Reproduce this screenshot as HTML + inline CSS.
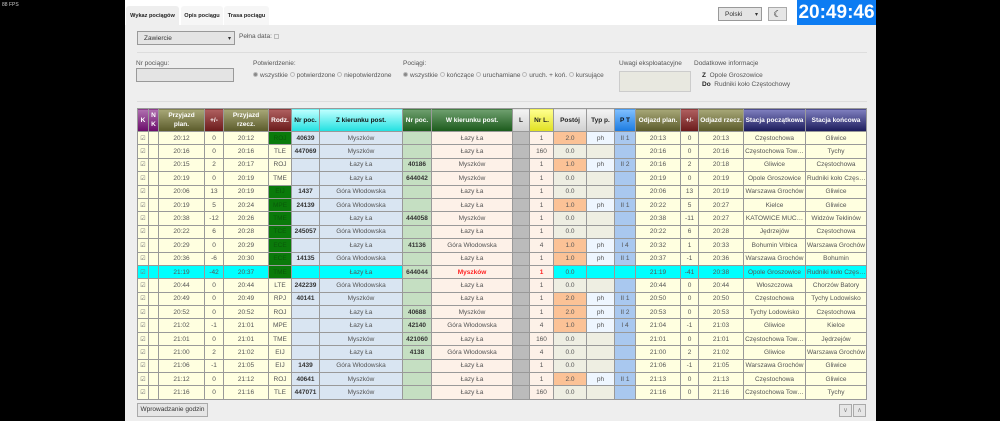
<!DOCTYPE html>
<html><head><meta charset="utf-8"><style>
*{box-sizing:border-box;margin:0;padding:0}
body{width:1000px;height:421px;background:#000;font-family:"Liberation Sans",Arial,sans-serif;position:relative;overflow:hidden;color:#555}
.fps{position:absolute;left:2px;top:2px;font-size:5px;color:#ccc}
.page{position:absolute;left:125px;top:0;width:751px;height:421px;background:#eee}
.top{position:absolute;left:0;top:0;width:751px;height:25px;background:#fff}
.tab{position:absolute;top:6px;height:19px;font-size:5.6px;color:#222;font-weight:bold;padding-top:7px;text-align:center;background:#f6f6f6;border-radius:3px 3px 0 0;white-space:nowrap;overflow:hidden}
.abs{position:absolute;font-size:6.5px;color:#555}
.sel{position:absolute;border:1px solid #999;background:#e4e4e4;font-size:6.5px;color:#333;padding:3px 6px}
.sel:after{content:"▾";position:absolute;right:3px;top:3px;font-size:6px}
.hr{position:absolute;left:12px;width:730px;height:1px;background:#ddd}
.rad{display:inline-block;width:5px;height:5px;border-radius:50%;border:1px solid #bbb;background:#eee;vertical-align:middle;margin:0 2px 1px 0}
.rad.on{background:#888}
table{position:absolute;left:12px;top:108px;width:729px;border-collapse:collapse;table-layout:fixed;font-size:6.5px}
th{height:23px;color:#fff;font-weight:bold;border:1px solid #999;text-align:center;line-height:9px;font-size:6.5px}
td{height:13.4px;border:1px solid #999;text-align:center;background:#ffffe0;color:#555;white-space:nowrap;overflow:hidden;padding:0 1px}
td.g{background:#0a7a0a;color:#0a5a0a}
td.n{background:#d9e5f2;font-weight:bold;color:#333}
td.z{background:#d9e5f2}
td.m{background:#c5dfc2;font-weight:bold;color:#333}
td.w{background:#fdf1e8}
td.l{background:#bbb}
td.p{background:#eeeee2}
td.po{background:#fbc296}
td.ty{background:#eef6ff}
td.pt{background:#a9c8ef}
td.ck{font-size:6px;color:#777}
tr.hi td{background:#00ffff}
tr.hi td.m{background:#c5dfc2}
tr.hi td.w{background:#fdf1e8}
tr.hi td.l{background:#bbb}
tr.hi td.g{background:#0a7a0a}
.red{color:#f22!important;font-weight:bold}
.pu{background:linear-gradient(#b070b0,#6a0a6a)}
.ol{background:linear-gradient(#a8a878,#5a5a2a)}
.dr{background:linear-gradient(#b06060,#6a1a1a)}
.cy{background:linear-gradient(#c0ffff,#20e0e0);color:#111!important}
.gr{background:linear-gradient(#70a070,#1a5a1a)}
.lg{background:linear-gradient(#f4f4f4,#d0d0d0);color:#222!important}
.ye{background:linear-gradient(#ffff90,#e0e020);color:#222!important}
.bl{background:linear-gradient(#80c0ff,#1a7ae0);color:#111!important}
.nv{background:linear-gradient(#8080c0,#1a1a5a)}
.btn{position:absolute;border:1px solid #aaa;background:#e6e6e6;font-size:6.5px;color:#333;text-align:center}
</style></head><body>
<div class="fps">88 FPS</div>
<div class="page">
<div class="top"></div>
<div class="tab" style="left:1px;width:53px;background:#eee">Wykaz pociągów</div>
<div class="tab" style="left:56px;width:42px">Opis pociągu</div>
<div class="tab" style="left:99px;width:45px">Trasa pociągu</div>
<div class="sel" style="left:593px;top:7px;width:44px;height:14px">Polski</div>
<div class="btn" style="left:643px;top:7px;width:19px;height:14px;font-size:9px;line-height:12px;color:#000">☾</div>
<div style="position:absolute;left:672px;top:0;width:79px;height:25px;background:#0d7cf2;color:#fff;font-weight:bold;font-size:19px;text-align:center;line-height:25px">20:49:46</div>

<div class="sel" style="left:12px;top:31px;width:98px;height:14px">Zawiercie</div>
<div class="abs" style="left:114px;top:33px">Pełna data: <span style="display:inline-block;width:5px;height:5px;border:1px solid #bbb;vertical-align:middle"></span></div>
<div class="hr" style="top:52px"></div>
<div class="abs" style="left:11px;top:60px">Nr pociągu:</div>
<div style="position:absolute;left:11px;top:68px;width:98px;height:14px;border:1px solid #999;background:#e4e4e4"></div>
<div class="abs" style="left:128px;top:60px">Potwierdzenie:</div>
<div class="abs" style="left:128px;top:72px"><span class="rad on"></span>wszystkie <span class="rad"></span>potwierdzone <span class="rad"></span>niepotwierdzone</div>
<div class="abs" style="left:278px;top:60px">Pociągi:</div>
<div class="abs" style="left:278px;top:72px"><span class="rad on"></span>wszystkie <span class="rad"></span>kończące <span class="rad"></span>uruchamiane <span class="rad"></span>uruch. + koń. <span class="rad"></span>kursujące</div>
<div class="abs" style="left:494px;top:60px">Uwagi eksploatacyjne</div>
<div style="position:absolute;left:494px;top:71px;width:72px;height:21px;border:1px solid #ccc;background:#e8e8e0"></div>
<div class="abs" style="left:569px;top:60px">Dodatkowe informacje</div>
<div class="abs" style="left:577px;top:72px"><b style="color:#222">Z</b>&nbsp; Opole Groszowice</div>
<div class="abs" style="left:577px;top:81px"><b style="color:#222">Do</b>&nbsp; Rudniki koło Częstochowy</div>
<div class="hr" style="top:101px"></div>

<table>
<colgroup><col style="width:11px"><col style="width:10px"><col style="width:46px"><col style="width:19px"><col style="width:45px"><col style="width:23px"><col style="width:28px"><col style="width:83px"><col style="width:29px"><col style="width:81px"><col style="width:17px"><col style="width:24px"><col style="width:33px"><col style="width:28px"><col style="width:21px"><col style="width:45px"><col style="width:18px"><col style="width:45px"><col style="width:62px"><col style="width:61px"></colgroup>
<tr><th class="pu">K</th><th class="pu">N<br>K</th><th class="ol">Przyjazd<br>plan.</th><th class="dr">+/-</th><th class="ol">Przyjazd<br>rzecz.</th><th class="dr">Rodz.</th><th class="cy">Nr poc.</th><th class="cy">Z kierunku post.</th><th class="gr">Nr poc.</th><th class="gr">W kierunku post.</th><th class="lg">L</th><th class="ye">Nr L.</th><th class="lg">Postój</th><th class="lg">Typ p.</th><th class="bl">P T</th><th class="ol">Odjazd plan.</th><th class="dr">+/-</th><th class="ol">Odjazd rzecz.</th><th class="nv">Stacja początkowa</th><th class="nv">Stacja końcowa</th></tr>
<tr><td class="ck">☑</td><td></td><td>20:12</td><td>0</td><td>20:12</td><td class="g">ROJ</td><td class="n">40639</td><td class="z">Myszków</td><td class="m"></td><td class="w">Łazy Ła</td><td class="l"></td><td class="w">1</td><td class="po">2.0</td><td class="ty">ph</td><td class="pt">II 1</td><td>20:13</td><td>0</td><td>20:13</td><td>Częstochowa</td><td>Gliwice</td></tr>
<tr><td class="ck">☑</td><td></td><td>20:16</td><td>0</td><td>20:16</td><td>TLE</td><td class="n">447069</td><td class="z">Myszków</td><td class="m"></td><td class="w">Łazy Ła</td><td class="l"></td><td class="w">160</td><td class="p">0.0</td><td class="p"></td><td class="pt"></td><td>20:16</td><td>0</td><td>20:16</td><td>Częstochowa Tow…</td><td>Tychy</td></tr>
<tr><td class="ck">☑</td><td></td><td>20:15</td><td>2</td><td>20:17</td><td>ROJ</td><td class="n"></td><td class="z">Łazy Ła</td><td class="m">40186</td><td class="w">Myszków</td><td class="l"></td><td class="w">1</td><td class="po">1.0</td><td class="ty">ph</td><td class="pt">II 2</td><td>20:16</td><td>2</td><td>20:18</td><td>Gliwice</td><td>Częstochowa</td></tr>
<tr><td class="ck">☑</td><td></td><td>20:19</td><td>0</td><td>20:19</td><td>TME</td><td class="n"></td><td class="z">Łazy Ła</td><td class="m">644042</td><td class="w">Myszków</td><td class="l"></td><td class="w">1</td><td class="p">0.0</td><td class="p"></td><td class="pt"></td><td>20:19</td><td>0</td><td>20:19</td><td>Opole Groszowice</td><td>Rudniki koło Częs…</td></tr>
<tr><td class="ck">☑</td><td></td><td>20:06</td><td>13</td><td>20:19</td><td class="g">EIJ</td><td class="n">1437</td><td class="z">Góra Włodowska</td><td class="m"></td><td class="w">Łazy Ła</td><td class="l"></td><td class="w">1</td><td class="p">0.0</td><td class="p"></td><td class="pt"></td><td>20:06</td><td>13</td><td>20:19</td><td>Warszawa Grochów</td><td>Gliwice</td></tr>
<tr><td class="ck">☑</td><td></td><td>20:19</td><td>5</td><td>20:24</td><td class="g">MPE</td><td class="n">24139</td><td class="z">Góra Włodowska</td><td class="m"></td><td class="w">Łazy Ła</td><td class="l"></td><td class="w">1</td><td class="po">1.0</td><td class="ty">ph</td><td class="pt">II 1</td><td>20:22</td><td>5</td><td>20:27</td><td>Kielce</td><td>Gliwice</td></tr>
<tr><td class="ck">☑</td><td></td><td>20:38</td><td>-12</td><td>20:26</td><td class="g">TME</td><td class="n"></td><td class="z">Łazy Ła</td><td class="m">444058</td><td class="w">Myszków</td><td class="l"></td><td class="w">1</td><td class="p">0.0</td><td class="p"></td><td class="pt"></td><td>20:38</td><td>-11</td><td>20:27</td><td>KATOWICE MUC…</td><td>Widzów Teklinów</td></tr>
<tr><td class="ck">☑</td><td></td><td>20:22</td><td>6</td><td>20:28</td><td class="g">TCE</td><td class="n">245057</td><td class="z">Góra Włodowska</td><td class="m"></td><td class="w">Łazy Ła</td><td class="l"></td><td class="w">1</td><td class="p">0.0</td><td class="p"></td><td class="pt"></td><td>20:22</td><td>6</td><td>20:28</td><td>Jędrzejów</td><td>Częstochowa</td></tr>
<tr><td class="ck">☑</td><td></td><td>20:29</td><td>0</td><td>20:29</td><td class="g">ECE</td><td class="n"></td><td class="z">Łazy Ła</td><td class="m">41136</td><td class="w">Góra Włodowska</td><td class="l"></td><td class="w">4</td><td class="po">1.0</td><td class="ty">ph</td><td class="pt">I 4</td><td>20:32</td><td>1</td><td>20:33</td><td>Bohumin Vrbica</td><td>Warszawa Grochów</td></tr>
<tr><td class="ck">☑</td><td></td><td>20:36</td><td>-6</td><td>20:30</td><td class="g">ECE</td><td class="n">14135</td><td class="z">Góra Włodowska</td><td class="m"></td><td class="w">Łazy Ła</td><td class="l"></td><td class="w">1</td><td class="po">1.0</td><td class="ty">ph</td><td class="pt">II 1</td><td>20:37</td><td>-1</td><td>20:36</td><td>Warszawa Grochów</td><td>Bohumin</td></tr>
<tr class="hi"><td class="ck">☑</td><td></td><td>21:19</td><td>-42</td><td>20:37</td><td class="g">TME</td><td class="n"></td><td class="z">Łazy Ła</td><td class="m">644044</td><td class="w red">Myszków</td><td class="l"></td><td class="w red">1</td><td>0.0</td><td></td><td></td><td>21:19</td><td>-41</td><td>20:38</td><td>Opole Groszowice</td><td>Rudniki koło Częs…</td></tr>
<tr><td class="ck">☑</td><td></td><td>20:44</td><td>0</td><td>20:44</td><td>LTE</td><td class="n">242239</td><td class="z">Góra Włodowska</td><td class="m"></td><td class="w">Łazy Ła</td><td class="l"></td><td class="w">1</td><td class="p">0.0</td><td class="p"></td><td class="pt"></td><td>20:44</td><td>0</td><td>20:44</td><td>Włoszczowa</td><td>Chorzów Batory</td></tr>
<tr><td class="ck">☑</td><td></td><td>20:49</td><td>0</td><td>20:49</td><td>RPJ</td><td class="n">40141</td><td class="z">Myszków</td><td class="m"></td><td class="w">Łazy Ła</td><td class="l"></td><td class="w">1</td><td class="po">2.0</td><td class="ty">ph</td><td class="pt">II 1</td><td>20:50</td><td>0</td><td>20:50</td><td>Częstochowa</td><td>Tychy Lodowisko</td></tr>
<tr><td class="ck">☑</td><td></td><td>20:52</td><td>0</td><td>20:52</td><td>ROJ</td><td class="n"></td><td class="z">Łazy Ła</td><td class="m">40688</td><td class="w">Myszków</td><td class="l"></td><td class="w">1</td><td class="po">2.0</td><td class="ty">ph</td><td class="pt">II 2</td><td>20:53</td><td>0</td><td>20:53</td><td>Tychy Lodowisko</td><td>Częstochowa</td></tr>
<tr><td class="ck">☑</td><td></td><td>21:02</td><td>-1</td><td>21:01</td><td>MPE</td><td class="n"></td><td class="z">Łazy Ła</td><td class="m">42140</td><td class="w">Góra Włodowska</td><td class="l"></td><td class="w">4</td><td class="po">1.0</td><td class="ty">ph</td><td class="pt">I 4</td><td>21:04</td><td>-1</td><td>21:03</td><td>Gliwice</td><td>Kielce</td></tr>
<tr><td class="ck">☑</td><td></td><td>21:01</td><td>0</td><td>21:01</td><td>TME</td><td class="n"></td><td class="z">Myszków</td><td class="m">421060</td><td class="w">Łazy Ła</td><td class="l"></td><td class="w">160</td><td class="p">0.0</td><td class="p"></td><td class="pt"></td><td>21:01</td><td>0</td><td>21:01</td><td>Częstochowa Tow…</td><td>Jędrzejów</td></tr>
<tr><td class="ck">☑</td><td></td><td>21:00</td><td>2</td><td>21:02</td><td>EIJ</td><td class="n"></td><td class="z">Łazy Ła</td><td class="m">4138</td><td class="w">Góra Włodowska</td><td class="l"></td><td class="w">4</td><td class="p">0.0</td><td class="p"></td><td class="pt"></td><td>21:00</td><td>2</td><td>21:02</td><td>Gliwice</td><td>Warszawa Grochów</td></tr>
<tr><td class="ck">☑</td><td></td><td>21:06</td><td>-1</td><td>21:05</td><td>EIJ</td><td class="n">1439</td><td class="z">Góra Włodowska</td><td class="m"></td><td class="w">Łazy Ła</td><td class="l"></td><td class="w">1</td><td class="p">0.0</td><td class="p"></td><td class="pt"></td><td>21:06</td><td>-1</td><td>21:05</td><td>Warszawa Grochów</td><td>Gliwice</td></tr>
<tr><td class="ck">☑</td><td></td><td>21:12</td><td>0</td><td>21:12</td><td>ROJ</td><td class="n">40641</td><td class="z">Myszków</td><td class="m"></td><td class="w">Łazy Ła</td><td class="l"></td><td class="w">1</td><td class="po">2.0</td><td class="ty">ph</td><td class="pt">II 1</td><td>21:13</td><td>0</td><td>21:13</td><td>Częstochowa</td><td>Gliwice</td></tr>
<tr><td class="ck">☑</td><td></td><td>21:16</td><td>0</td><td>21:16</td><td>TLE</td><td class="n">447071</td><td class="z">Myszków</td><td class="m"></td><td class="w">Łazy Ła</td><td class="l"></td><td class="w">160</td><td class="p">0.0</td><td class="p"></td><td class="pt"></td><td>21:16</td><td>0</td><td>21:16</td><td>Częstochowa Tow…</td><td>Tychy</td></tr>
</table>
<div class="btn" style="left:12px;top:403px;width:71px;height:14px;line-height:12px">Wprowadzanie godzin</div>
<div class="btn" style="left:714px;top:404px;width:13px;height:13px;line-height:11px;color:#888">∨</div>
<div class="btn" style="left:728px;top:404px;width:13px;height:13px;line-height:11px;color:#888">∧</div>
</div>
</body></html>
